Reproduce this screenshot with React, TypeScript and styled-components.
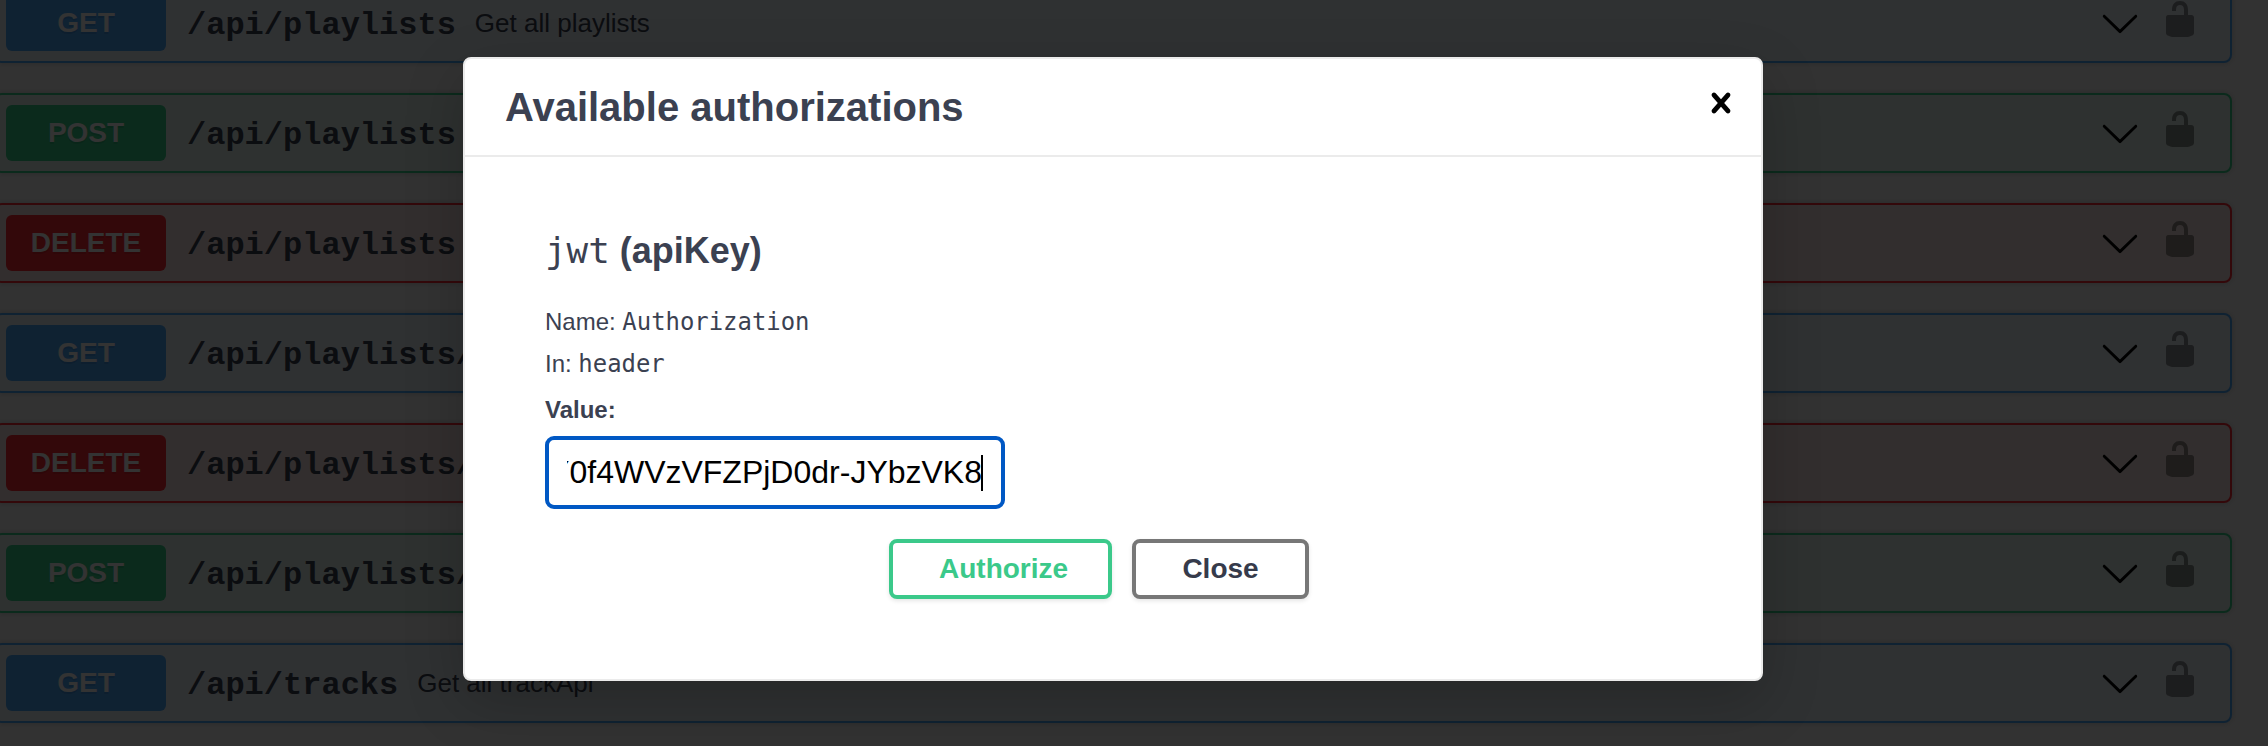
import React from "react";
import styled, { createGlobalStyle } from "styled-components";

const sans = `"Liberation Sans", Arial, Helvetica, sans-serif`;
const mono = `"Liberation Mono", "Courier New", monospace`;
const codeMono = `"DejaVu Sans Mono", Menlo, monospace`;

const GlobalStyle = createGlobalStyle`
  *, *::before, *::after { box-sizing: border-box; }
  body { margin: 0; background: #fafafa; color: #3b4151; font-family: ${sans}; overflow: hidden; }
`;

type Method = "GET" | "POST" | "DELETE";

const methodColors: Record<Method, { solid: string; tint: string }> = {
  GET: { solid: "#4ca8fb", tint: "#ebf2fa" },
  POST: { solid: "#37d08a", tint: "#e6f5ef" },
  DELETE: { solid: "#ff2832", tint: "#fae7e6" },
};

const Page = styled.div`
  position: relative;
  height: 746px;
  overflow: hidden;
`;

const OperationList = styled.main`
  display: flex;
  flex-direction: column;
  gap: 30px;
  width: 2238px;
  margin: -17px 0 0 -6px;
`;

const Operation = styled.section<{ $method: Method }>`
  display: flex;
  align-items: center;
  flex: none;
  height: 80px;
  padding: 10px 30px 10px 10px;
  border: 2px solid ${(p) => methodColors[p.$method].solid};
  border-radius: 8px;
  background: ${(p) => methodColors[p.$method].tint};
  box-shadow: 0 0 6px rgba(0, 0, 0, 0.19);
`;

const MethodBadge = styled.span<{ $method: Method }>`
  width: 160px;
  height: 56px;
  border-radius: 6px;
  background: ${(p) => methodColors[p.$method].solid};
  color: #fff;
  font-size: 28px;
  font-weight: 700;
  line-height: 56px;
  text-align: center;
  text-shadow: 0 2px 0 rgba(0, 0, 0, 0.1);
`;

const OperationPath = styled.span`
  padding: 5px 19px 0 21px;
  font-family: ${mono};
  font-size: 32px;
  font-weight: 700;
`;

const Summary = styled.span`
  flex: 1;
  font-size: 26px;
`;

const Actions = styled.div`
  display: flex;
  gap: 20px;
`;

const ArrowIcon = styled.svg`
  width: 40px;
  height: 40px;
  fill: #000;
`;

const LockIcon = styled.svg`
  width: 40px;
  height: 40px;
  margin-top: -4px;
  opacity: 0.4;
  fill: #000;
`;

const Backdrop = styled.div`
  position: absolute;
  inset: 0;
  display: flex;
  align-items: flex-start;
  padding: 57px 0 0 463px;
  background: rgba(0, 0, 0, 0.8);
`;

const Dialog = styled.div`
  width: 1300px;
  height: 624px;
  border: 2px solid #ebebeb;
  border-radius: 8px;
  background: #fff;
  box-shadow: 0 20px 60px rgba(0, 0, 0, 0.2);
`;

const DialogHeader = styled.header`
  display: flex;
  align-items: center;
  justify-content: space-between;
  height: 98px;
  padding: 0 20px 0 40px;
  border-bottom: 2px solid #ebebeb;
`;

const DialogTitle = styled.h3`
  margin: 0;
  font-size: 40px;
  font-weight: 700;
  line-height: 48px;
`;

const CloseIconButton = styled.button`
  display: flex;
  margin: -8px 0 0;
  padding: 0;
  border: 0;
  background: none;
`;

const DialogBody = styled.div`
  display: flex;
  flex-direction: column;
  padding: 69px 80px 80px;
`;

const SchemeTitle = styled.h4`
  height: 50px;
  margin: 0 0 25px;
  font-size: 36px;
  line-height: 50px;
`;

const Code = styled.code`
  font-family: ${codeMono};
  font-size: 0.997em;
  font-weight: 400;
  line-height: 1;
`;

const Detail = styled.p`
  height: 42px;
  margin: 0;
  font-size: 24px;
  line-height: 42px;
`;

const ValueLabel = styled.label`
  margin: 4px 0 5px;
  font-size: 24px;
  font-weight: 700;
  line-height: 42px;
`;

const TokenField = styled.div`
  display: flex;
  width: 460px;
  height: 73px;
  padding: 0 18px;
  border: 4px solid #0058c4;
  border-radius: 9px;
  background: #fff;
`;

const TokenText = styled.div`
  display: flex;
  align-items: center;
  justify-content: flex-end;
  flex: 1;
  min-width: 0;
  overflow: hidden;
  color: #000;
  font-size: 32px;
  font-kerning: none;
  line-height: 65px;
  white-space: nowrap;
`;

const Caret = styled.span`
  flex: none;
  width: 2px;
  height: 36px;
  margin-left: -1px;
  background: #000;
`;

const ButtonRow = styled.div`
  display: flex;
  justify-content: center;
  gap: 20px;
  margin-top: 30px;
  padding-right: 28px;
`;

const Button = styled.button<{ $primary?: boolean }>`
  width: ${(p) => (p.$primary ? 223 : 177)}px;
  height: 60px;
  padding: 0 ${(p) => (p.$primary ? 40 : 46)}px 0 46px;
  border: 4px solid ${(p) => (p.$primary ? "#3bc98a" : "#777")};
  border-radius: 8px;
  background: #fff;
  box-shadow: 0 2px 4px rgba(0, 0, 0, 0.1);
  color: ${(p) => (p.$primary ? "#3bc98a" : "#363b4b")};
  font: 700 28px ${sans};
  white-space: nowrap;
`;

const operations: { method: Method; path: string; summary?: string }[] = [
  { method: "GET", path: "/api/playlists", summary: "Get all playlists" },
  { method: "POST", path: "/api/playlists" },
  { method: "DELETE", path: "/api/playlists" },
  { method: "GET", path: "/api/playlists/" },
  { method: "DELETE", path: "/api/playlists/" },
  { method: "POST", path: "/api/playlists/" },
  { method: "GET", path: "/api/tracks", summary: "Get all trackApi" },
];

export default function App() {
  return (
    <Page>
      <GlobalStyle />
      <OperationList>
        {operations.map((op, i) => (
          <Operation key={i} $method={op.method}>
            <MethodBadge $method={op.method}>{op.method}</MethodBadge>
            <OperationPath>{op.path}</OperationPath>
            <Summary>{op.summary}</Summary>
            <Actions>
              <ArrowIcon viewBox="0 0 20 20">
                <path d="M17.418 6.109c.272-.268.709-.268.979 0s.271.701 0 .969l-7.908 7.83c-.27.268-.707.268-.979 0l-7.908-7.83c-.27-.268-.27-.701 0-.969.271-.268.709-.268.979 0L10 13.25l7.418-7.141z" />
              </ArrowIcon>
              <LockIcon viewBox="0 0 20 20">
                <path d="M15.8 8H14V5.6C14 2.703 12.665 1 10 1 7.334 1 6 2.703 6 5.6V6h2v-.801C8 3.754 8.797 3 10 3c1.203 0 2 .754 2 2.199V8H4c-.553 0-1 .646-1 1.199V17c0 .549.428 1.139.951 1.307l1.197.387C5.672 18.861 6.55 19 7.1 19h5.8c.549 0 1.428-.139 1.951-.307l1.196-.387c.524-.167.953-.757.953-1.306V9.199C17 8.646 16.352 8 15.8 8z" />
              </LockIcon>
            </Actions>
          </Operation>
        ))}
      </OperationList>
      <Backdrop>
        <Dialog role="dialog">
          <DialogHeader>
            <DialogTitle>Available authorizations</DialogTitle>
            <CloseIconButton aria-label="Close dialog">
              <svg width="40" height="40" viewBox="0 0 20 20">
                <path d="M14.348 14.849c-.469.469-1.229.469-1.697 0L10 11.819l-2.651 3.029c-.469.469-1.229.469-1.697 0-.469-.469-.469-1.229 0-1.697l2.758-3.15-2.759-3.152c-.469-.469-.469-1.228 0-1.697.469-.469 1.228-.469 1.697 0L10 8.183l2.651-3.031c.469-.469 1.228-.469 1.697 0 .469.469.469 1.229 0 1.697l-2.758 3.152 2.758 3.15c.469.469.469 1.229 0 1.698z" />
              </svg>
            </CloseIconButton>
          </DialogHeader>
          <DialogBody>
            <SchemeTitle>
              <Code>jwt</Code> (apiKey)
            </SchemeTitle>
            <Detail>
              Name: <Code>Authorization</Code>
            </Detail>
            <Detail>
              In: <Code>header</Code>
            </Detail>
            <ValueLabel>Value:</ValueLabel>
            <TokenField>
              <TokenText>
                <span>Y0f4WVzVFZPjD0dr-JYbzVK8</span>
                <Caret />
              </TokenText>
            </TokenField>
            <ButtonRow>
              <Button $primary>Authorize</Button>
              <Button>Close</Button>
            </ButtonRow>
          </DialogBody>
        </Dialog>
      </Backdrop>
    </Page>
  );
}
